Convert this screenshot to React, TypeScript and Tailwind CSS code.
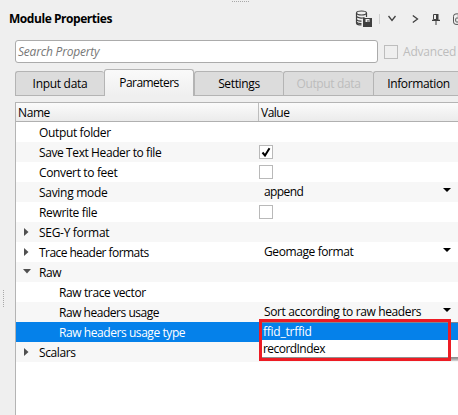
import type { ReactNode } from 'react'
import clsx from 'clsx'

type PropertyRow = {
  name: string
  tracking: string
  level?: 0 | 1
  expand?: 'open' | 'closed'
  checked?: boolean
  value?: string
  valueTracking?: string
  selected?: boolean
}

const TABS = [
  { label: 'Input data', width: 'w-[89px]', tracking: 'tracking-[-0.3px]' },
  { label: 'Parameters', width: 'w-[90px]', tracking: 'tracking-[-0.55px]', active: true },
  { label: 'Settings', width: 'w-[89px]', tracking: 'tracking-[-0.35px]' },
  { label: 'Output data', width: 'w-[90px]', tracking: 'tracking-[-0.35px]', disabled: true },
  { label: 'Information', width: 'w-[90px]', tracking: 'tracking-[-0.35px]' },
]

const ROWS: PropertyRow[] = [
  { name: 'Output folder', tracking: 'tracking-[-0.35px]' },
  { name: 'Save Text Header to file', tracking: 'tracking-[-0.4px]', checked: true },
  { name: 'Convert to feet', tracking: 'tracking-[-0.35px]', checked: false },
  {
    name: 'Saving mode',
    tracking: 'tracking-[-0.3px]',
    value: 'append',
    valueTracking: 'tracking-[-0.6px]',
  },
  { name: 'Rewrite file', tracking: 'tracking-[-0.35px]', checked: false },
  { name: 'SEG-Y format', tracking: 'tracking-[-0.3px]', expand: 'closed' },
  {
    name: 'Trace header formats',
    tracking: 'tracking-[-0.55px]',
    expand: 'closed',
    value: 'Geomage format',
    valueTracking: 'tracking-[-0.4px]',
  },
  { name: 'Raw', tracking: 'tracking-[-0.4px]', expand: 'open' },
  { name: 'Raw trace vector', tracking: 'tracking-[-0.38px]', level: 1 },
  {
    name: 'Raw headers usage',
    tracking: 'tracking-[-0.47px]',
    level: 1,
    value: 'Sort according to raw headers',
    valueTracking: 'tracking-[-0.37px]',
  },
  { name: 'Raw headers usage type', tracking: 'tracking-[-0.43px]', level: 1, selected: true },
  { name: 'Scalars', tracking: 'tracking-[-0.4px]', expand: 'closed' },
]

const SaveDatabaseIcon = () => (
  <svg width="17" height="17" viewBox="0 0 17 17" fill="none" className="ml-[355px] shrink-0">
    <g stroke="#404040" strokeWidth="1.2">
      <ellipse cx="6.5" cy="3" rx="5" ry="2" />
      <path d="M1.5 3v10c0 1 1.5 2 5 2M11.5 3v4M1.5 6.3c1 1.8 5 2.2 8 1.2M1.5 9.6c1 1.2 3 1.7 5 1.5M1.5 12.2c.8 1 2.5 1.6 5 1.5" />
    </g>
    <path d="M8 8h9v9H8z" fill="#404040" />
    <path d="M10.5 9h4v3h-1v-2h-1v2h-2z" fill="#efefef" />
  </svg>
)

const PinIcon = () => (
  <svg width="8" height="12" viewBox="0 0 8 12" className="ml-[13px] shrink-0">
    <path d="M1.5 1.5h4v5h-4z" fill="#efefef" stroke="#404040" />
    <path d="M4 1h2.5v6H4zM0 6.7h8V8H0zM3.5 8h1v4h-1z" fill="#404040" />
  </svg>
)

const CheckBox = ({ checked, disabled }: { checked?: boolean; disabled?: boolean }) => (
  <span
    className={clsx(
      'flex size-[14px] shrink-0 items-center justify-center border',
      disabled ? 'border-[#bdbdbd]' : 'border-[#b9b9b9] bg-white'
    )}
  >
    {checked && (
      <svg width="10" height="10" viewBox="0 0 10 10">
        <path d="M1.5 5.5 4 8.5 8.5 1.2" fill="none" stroke="#000" strokeWidth="2" />
      </svg>
    )}
  </span>
)

const TreeArrow = ({ state }: { state?: 'open' | 'closed' }) => (
  <span className="flex w-[23px] shrink-0 items-center pl-[7px]">
    {state === 'closed' && (
      <svg width="5" height="8" viewBox="0 0 5 8" className="ml-px">
        <path d="M0 0 4.5 4 0 8z" fill="#505050" />
      </svg>
    )}
    {state === 'open' && (
      <svg width="8" height="5" viewBox="0 0 8 5" className="-mt-px">
        <path d="M0 0h8L4 4.5z" fill="#505050" />
      </svg>
    )}
  </span>
)

const ValueCell = ({ children }: { children?: ReactNode }) => (
  <div className="flex min-w-0 flex-1 items-center">{children}</div>
)

const Row = ({ row, striped }: { row: PropertyRow; striped: boolean }) => (
  <div
    className={clsx(
      'flex h-5',
      row.selected ? 'bg-[#0581ea] text-white' : striped ? 'bg-[#f7f7f7]' : 'bg-white'
    )}
  >
    <div className="flex w-[243px] shrink-0 items-center">
      <TreeArrow state={row.expand} />
      <span className={clsx('pt-px', row.level === 1 && 'pl-5', row.tracking)}>{row.name}</span>
    </div>
    <ValueCell>
      {row.checked !== undefined && <CheckBox checked={row.checked} />}
      {row.value && (
        <>
          <span className={clsx('pl-[5px]', row.valueTracking)}>{row.value}</span>
          <svg width="8" height="4" viewBox="0 0 8 4" className="mr-[7px] mb-1 ml-auto">
            <path d="M0 0h8L4 4z" fill="#000" />
          </svg>
        </>
      )}
    </ValueCell>
  </div>
)

// Open editor list of the selected row
const UsageTypePopup = () => (
  <div className="absolute top-[219px] left-[243px] w-[199px]">
    <div className="h-9 border-b border-[#909090] bg-white">
      <div className="h-[18px] border-t border-[#7a8794] bg-[#0581ea] pl-1 leading-[18px] text-white">
        <span className="tracking-[-0.25px]">ffid_trffid</span>
      </div>
      <div className="pl-1 leading-[17px] tracking-[-0.55px]">recordIndex</div>
    </div>
    <div className="h-[3px] bg-gradient-to-b from-[#909090] to-[#d8d8d8]" />
    <div className="absolute top-[-3px] left-0 h-[42px] w-[192px] border-3 border-[#ed1c24]" />
  </div>
)

export default function App() {
  return (
    <div className="flex h-[415px] w-[458px] flex-col overflow-hidden bg-[#efefef] font-['Open_Sans','Noto_Sans',sans-serif] text-[12px] leading-4 whitespace-nowrap text-black">
      <div className="relative flex h-10 shrink-0 items-center pb-[3px]">
        <div className="absolute top-px left-[232px] w-[17px] border-t border-dotted border-[#a8a8a8]" />
        <h1 className="absolute top-[11px] left-[9px] font-bold tracking-[-0.45px]">
          Module Properties
        </h1>
        <SaveDatabaseIcon />
        <div className="ml-[7px] h-[10px] w-px shrink-0 bg-[#d0d0d0]" />
        <svg width="8" height="7" viewBox="0 0 8 7" className="ml-2 shrink-0">
          <path d="m.5 1 3.5 4.5L7.5 1" fill="none" stroke="#404040" strokeWidth="1.3" />
        </svg>
        <svg width="7" height="8" viewBox="0 0 7 8" className="ml-4 shrink-0">
          <path d="M.8.5 5.5 4 .8 7.5" fill="none" stroke="#404040" strokeWidth="1.3" />
        </svg>
        <PinIcon />
        <svg width="12" height="12" viewBox="0 0 12 12" className="ml-[13px] shrink-0">
          <rect x=".5" y=".9" width="11" height="10.5" rx="2.5" fill="none" stroke="#555" />
          <rect x="2.7" y="5" width="4.5" height="4" rx="1" fill="none" stroke="#555" />
          <path d="M4.5 3H9v4" fill="none" stroke="#777" />
        </svg>
      </div>

      <div className="flex h-[23px] shrink-0 items-center pl-[15px]">
        <div className="h-[23px] w-[363px] rounded-[3px] border border-[#ababab] bg-white pl-[2px] leading-[22px] tracking-[-0.2px] text-[#777] italic">
          Search Property
        </div>
        <div className="ml-[6px] flex items-center gap-[5px] text-[#bdbdbd]">
          <CheckBox disabled />
          <span className="tracking-[-0.2px]">Advanced</span>
        </div>
      </div>

      <div className="mt-[6px] ml-[15px] flex h-[27px] shrink-0 items-end">
        {TABS.map((tab) => (
          <div
            key={tab.label}
            className={clsx(
              'flex shrink-0 items-center justify-center rounded-t-[3px] border-t border-l border-[#b4b4b4]',
              tab.width,
              tab.tracking,
              tab.active
                ? 'h-[27px] border-r bg-gradient-to-b from-[#fafafa] to-[#efefef]'
                : 'h-[25px] border-b bg-[#dcdcdc]',
              tab.disabled && 'text-[#bdbdbd]'
            )}
          >
            {tab.label}
          </div>
        ))}
      </div>

      <div className="mt-[6px] flex min-h-0 flex-1">
        <div className="w-[15px] shrink-0 pt-[188px] pl-[3px]">
          <div className="h-[17px] w-px border-l border-dotted border-[#a8a8a8]" />
        </div>
        <div className="relative min-w-0 flex-1 border-t border-l border-[#b4b4b4] bg-white">
          <div className="flex h-[19px] border-b border-[#b0b0b0] bg-gradient-to-b from-[#fbfbfb] to-[#ebebeb] leading-[19px]">
            <div className="w-[243px] shrink-0 border-r border-[#bdbdbd] pl-[2px] tracking-[-0.4px]">
              Name
            </div>
            <div className="pl-[2px] tracking-[-0.5px]">Value</div>
          </div>
          {ROWS.map((row, i) => (
            <Row key={row.name} row={row} striped={i % 2 === 1} />
          ))}
          <UsageTypePopup />
        </div>
      </div>
    </div>
  )
}
